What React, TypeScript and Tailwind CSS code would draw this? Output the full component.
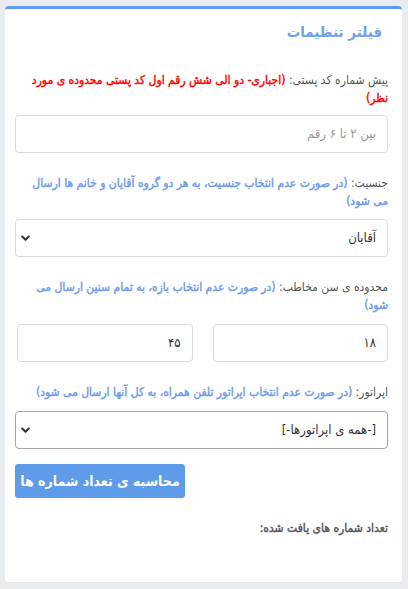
const Chevron = () => (
  <svg width="9" height="7" viewBox="0 0 9 7" fill="none">
    <path d="M1.2 1.5 L4.5 4.8 L7.8 1.5" stroke="#333" strokeWidth="2" strokeLinecap="round" strokeLinejoin="round" />
  </svg>
)

export default function App() {
  return (
    <div
      dir="rtl"
      className="min-h-[589px] bg-[#e9ecef] pt-[6px] pb-[7px] pr-[6px] pl-[5px] text-[12px] leading-[18px] text-[#555]"
      style={{ fontFamily: '"DejaVu Sans Condensed", "DejaVu Sans", sans-serif' }}
    >
      <div className="h-[576px] rounded-[4px] border-t-[3px] border-[#5e9cec] bg-white pt-[12px] pr-[14px] pl-[10px]">
        {/* title */}
        <h1 className="pr-[6px] text-[15px] font-bold leading-[22px] text-[#6ea2e6]">فیلتر تنظیمات</h1>

        {/* postal code */}
        <div className="mt-[28px]">
          <p className="mb-[8px]">
            پیش شماره کد پستی:{' '}
            <span className="text-[#ff0000] [-webkit-text-stroke:0.4px_#ff0000]">(اجباری- دو الی شش رقم اول کد پستی محدوده ی مورد نظر)</span>
          </p>
          <div className="flex h-[38px] items-center rounded-[4px] border border-[#dcdcdc] px-[11px] text-[13px] text-[#999]">
            بین ۲ تا ۶ رقم
          </div>
        </div>

        {/* gender */}
        <div className="mt-[21px]">
          <p className="mb-[9px]">
            جنسیت:{' '}
            <span className="text-[#6d9bea] [-webkit-text-stroke:0.4px_#6d9bea]">(در صورت عدم انتخاب جنسیت، به هر دو گروه آقایان و خانم ها ارسال می شود)</span>
          </p>
          <div className="flex h-[38px] items-center justify-between rounded-[4px] border border-[#dcdcdc] pr-[11px] pl-[5px] text-[13px] text-[#333]">
            <span>آقایان</span>
            <Chevron />
          </div>
        </div>

        {/* age */}
        <div className="mt-[21px]">
          <p className="mb-[10px]">
            محدوده ی سن مخاطب:{' '}
            <span className="text-[#6d9bea] [-webkit-text-stroke:0.4px_#6d9bea]">(در صورت عدم انتخاب بازه، به تمام سنین ارسال می شود)</span>
          </p>
          <div className="ml-[2px] flex gap-[20px]">
            <div className="flex h-[38px] flex-1 items-center rounded-[4px] border border-[#dcdcdc] px-[11px] text-[13px] text-[#333]">۱۸</div>
            <div className="flex h-[38px] flex-1 items-center rounded-[4px] border border-[#dcdcdc] px-[11px] text-[13px] text-[#333]">۴۵</div>
          </div>
        </div>

        {/* operator */}
        <div className="mt-[21px]">
          <p className="mb-[10px]">
            اپراتور:{' '}
            <span className="text-[#6d9bea] [-webkit-text-stroke:0.4px_#6d9bea]">(در صورت عدم انتخاب اپراتور تلفن همراه، به کل آنها ارسال می شود)</span>
          </p>
          <div className="flex h-[38px] items-center justify-between rounded-[4px] border border-[#a6a6a6] pr-[11px] pl-[5px] text-[13px] text-[#333]">
            <span>[-همه ی اپراتورها-]</span>
            <Chevron />
          </div>
        </div>

        {/* button, floated to the left */}
        <div className="mt-[15px] flex justify-end">
          <button className="h-[34px] w-[170px] whitespace-nowrap rounded-[3px] bg-[#5e9cea] text-[14px] font-bold text-white">
            محاسبه ی تعداد شماره ها
          </button>
        </div>

        <p className="mt-[21px] text-[#555] [-webkit-text-stroke:0.4px_#555]">تعداد شماره های یافت شده:</p>
      </div>
    </div>
  )
}
